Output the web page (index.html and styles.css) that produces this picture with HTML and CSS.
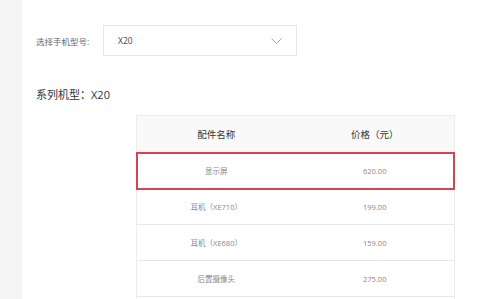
FILE: index.html
```html
<!DOCTYPE html>
<html lang="zh-CN">
<head>
    <meta charset="UTF-8">
    <meta name="viewport" content="width=device-width, initial-scale=1.0">
    <title>配件价格查询</title>
    <link rel="stylesheet" href="styles.css">
</head>
<body>

    <!-- 左侧灰条 -->
    <div class="side"></div>

    <div class="main">
        <!-- 选择机型 -->
        <div class="filter">
            <span class="filter-label">选择手机型号:</span>
            <div class="select">
                <span class="select-value">X20</span>
                <svg class="select-arrow" width="11" height="6" viewBox="0 0 11 6">
                    <path d="M0.5 0.5 L5.5 5.5 L10.5 0.5" fill="none" stroke="#a8a8a8" stroke-width="1"/>
                </svg>
            </div>
        </div>

        <h2 class="series">系列机型：X20</h2>

        <!-- 配件价格表 -->
        <div class="parts">
            <div class="parts-row parts-head">
                <div>配件名称</div>
                <div>价格（元）</div>
            </div>
            <div class="parts-row active">
                <div>显示屏</div>
                <div>620.00</div>
            </div>
            <div class="parts-row">
                <div>耳机（XE710）</div>
                <div>199.00</div>
            </div>
            <div class="parts-row">
                <div>耳机（XE680）</div>
                <div>159.00</div>
            </div>
            <div class="parts-row">
                <div>后置摄像头</div>
                <div>275.00</div>
            </div>
            <div class="parts-row parts-more"></div>
        </div>
    </div>

</body>
</html>
```

FILE: styles.css
```css
/* Базовые стили */
body {
    margin: 0;
    display: flex;
    height: 299px;
    overflow: hidden;
    background-color: #fff;
    font-family: "Open Sans", "Noto Sans CJK SC", sans-serif;
    color: #333;
}

.side {
    width: 22px;
    flex-shrink: 0;
    background-color: #f5f5f5;
}

.main {
    flex: 1;
    padding: 25px 0 0 14px;
}

/* Выбор модели */
.filter {
    display: flex;
    align-items: center;
}

.filter-label {
    width: 67px;
    font-size: 8.5px;
    color: #666;
}

.select {
    box-sizing: border-box;
    width: 194px;
    height: 31px;
    border: 1px solid #e6e6e6;
    display: flex;
    align-items: center;
    justify-content: space-between;
    padding: 0 14px 0 14px;
}

.select-value {
    font-size: 8.5px;
    color: #444;
}

.series {
    margin: 31px 0 0 0;
    font-size: 11px;
    font-weight: normal;
    line-height: 16px;
    color: #333;
}

/* Таблица */
.parts {
    margin: 12px 0 0 100px;
    width: 319px;
    box-sizing: border-box;
    border: 1px solid #ececec;
    border-bottom: none;
}

.parts-row {
    box-sizing: border-box;
    display: grid;
    grid-template-columns: 1fr 1fr;
    align-items: center;
    height: 36px;
    border-bottom: 1px solid #e8e8e8;
    font-size: 7.5px;
    color: #888;
    text-align: center;
}

.parts-head {
    height: 37px;
    background-color: #f9f9f9;
    font-size: 9.5px;
    color: #333;
}

.parts-row.active {
    position: relative;
    outline: 2px solid #d9434c;
    outline-offset: -1px;
}

.parts-more {
    border-bottom: none;
}
```
